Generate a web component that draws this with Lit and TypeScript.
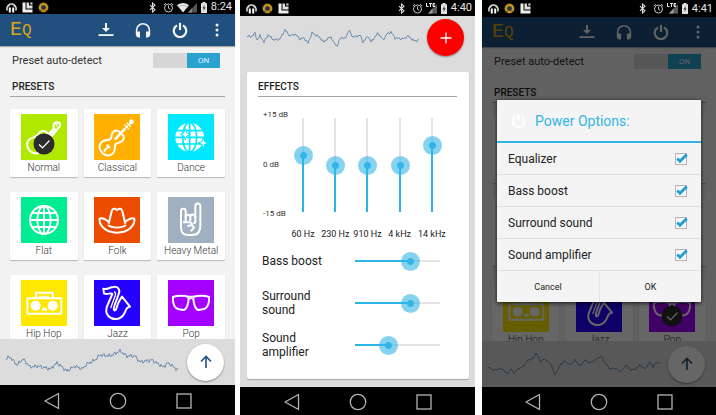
import { LitElement, html, svg, css, nothing } from "lit";
import { customElement, property } from "lit/decorators.js";
import { classMap } from "lit/directives/class-map.js";

/* ---------- shared glyphs ---------- */

const powerIcon = svg`<g fill="none" stroke="currentColor" stroke-width="2.200"><path d="M5 3.400A6.200 6.200 0 1 0 11 3.400"/><path d="M8 .800V8"/></g>`;
const downloadIcon = svg`<g fill="currentColor"><path d="M7 1h2v5h3L8 10 4 6h3z"/><path d="M.500 12.200h15v1.800H.500z"/></g>`;
const headphonesIcon = svg`<path fill="none" stroke="currentColor" stroke-width="1.600" d="M1.600 13V8.200a6.400 6.400 0 0 1 12.800 0V13"/><path fill="currentColor" d="M1 9.600h4v5.800H3.400Q1 15.400 1 13zM11 9.600h4V13q0 2.400-2.400 2.400H11z"/>`;
const dotsIcon = svg`<g fill="currentColor"><circle cx="8" cy="3" r="1.500"/><circle cx="8" cy="8" r="1.500"/><circle cx="8" cy="13" r="1.500"/></g>`;

const statusGlyphs: Record<string, { w: number; art: unknown }> = {
  phones: {
    w: 11,
    art: svg`<path d="M1.300 8.500A4.600 4.600 0 1 1 9.700 8.500" fill="none" stroke="#e8e8e8" stroke-width="1.500"/><path d="M2.500 5.200a3 3 0 0 1 6 0" fill="none" stroke="#bbb"/><path d="M2.800 5.500h2v5h-2zM6.200 5.500h2v5h-2z" fill="#fff"/>`,
  },
  le: {
    w: 11,
    art: svg`<path d="M.500.500H3.500V7.500H10.500V10.500H.500z" fill="#eee"/><path d="M4.500.500H7V3.500H10.500V6.500H4.500z" fill="#ddd"/><path d="M8.300.500h2.200v2H8.300z" fill="#ddd"/>`,
  },
  speaker: {
    w: 11,
    art: svg`<circle cx="5.500" cy="5.500" r="5" fill="#8a6a1c"/><circle cx="5.500" cy="5.500" r="3.700" fill="none" stroke="#e3a622" stroke-width="1.300"/><circle cx="5.500" cy="5.500" r="2" fill="#23304a"/><path d="M1.500 9.800l2-2M9.500 9.800l-2-2" stroke="#30281a"/>`,
  },
  bluetooth: {
    w: 11,
    art: svg`<path d="M1 3.200 6 7.800 3.500 10V1L6 3.200 1 7.800" fill="none" stroke="#ddd" stroke-width="1.100"/>`,
  },
  alarm: {
    w: 11,
    art: svg`<g fill="none" stroke="#c8c8c8"><circle cx="5.500" cy="6" r="4"/><path d="M5.500 3.500V6.200l1.800 1M.800 3l2-1.800M10.200 3l-2-1.800"/></g>`,
  },
  wifi: {
    w: 20,
    art: svg`<path d="M0 3.200Q6-1.200 12 3.200L6 10.500z" fill="#e6e6e6"/><path d="M1.500 5Q6 1.500 10.500 5" stroke="#999" fill="none" stroke-width=".600"/><path d="M20 1V10.500H11z" fill="#555"/><path d="M15 6.300V10.500H11z" fill="#888"/>`,
  },
  lte: {
    w: 11,
    art: svg`<path d="M11 1V10.500H2z" fill="#5c5c5c"/><path d="M.500 0V3.500H2.500M3 .500H6M4.500.500V4M9 .500H7V3.500H9M7 2H9" stroke="#eee" fill="none"/><path d="M6.500 5.500V10.500H2z" fill="#999"/>`,
  },
  battery: {
    w: 8,
    art: svg`<path d="M2.500 0h3v1.200H7V11H1V1.200h1.500z" fill="#e2e2e2"/><path d="M4.800 2.800 2.500 6.300h1.400L3.300 9 5.700 5.500H4.200z" fill="#222"/>`,
  },
};

/* ---------- preset artwork, drawn on a 138-unit tile ---------- */

const globeLines = svg`<ellipse cx="69" cy="69" rx="20" ry="42"/><path d="M69 27V111M27 69H111M33 48H105M33 90H105"/>`;

interface Preset {
  name: string;
  color: string;
  art: unknown;
}

const presets: Preset[] = [
  {
    name: "Normal",
    color: "#b0e800",
    art: svg`<path d="M82 60C70 46 58 50 52 60 46 72 28 68 20 82 14 98 26 118 44 118 60 120 62 106 76 102 94 98 94 76 82 60Z"/><path d="M74 70 98 44M84 78 106 50M78 76 100 50" /><path d="M98 44 98 30Q106 22 116 27 120 36 112 42L106 50Z"/><circle cx="107" cy="34" r="3" stroke-width="3"/>`,
  },
  {
    name: "Classical",
    color: "#ffb000",
    art: svg`<g transform="translate(53 87) rotate(43)"><path d="M0-40C14-43 21-34 19-24 17-15 11-14 11-6 11 2 24 6 24 20 24 34 12 41 0 41-12 41-24 34-24 20-24 6-11 2-11-6-11-14-17-15-19-24-21-34-14-43 0-40Z"/><path d="M0-14V-60" stroke-width="8"/><path d="M0-60V-84M-10-66H10M-9-75H9" stroke-width="4"/><circle cx="0" cy="-87" r="4" fill="#fff"/><path d="M0 16V34M-7 14H7" stroke-width="6"/></g>`,
  },
  {
    name: "Dance",
    color: "#00e8ff",
    art: svg`<circle cx="65" cy="70" r="43" fill="#fff" stroke="none"/><g stroke="#00e8ff" stroke-width="5"><ellipse cx="65" cy="70" rx="21" ry="44"/><path d="M65 26V114M20 70H110M24 50H106M24 90H106"/></g><path fill="#fff" stroke="#00e8ff" stroke-width="3" d="M52 44 56 56 67 61 56 66 52 78 48 66 37 61 48 56ZM106 70 110 83 122 87 110 91 106 104 102 91 90 87 102 83Z"/>`,
  },
  {
    name: "Flat",
    color: "#00ec92",
    art: svg`<circle cx="69" cy="69" r="42"/>${globeLines}`,
  },
  {
    name: "Folk",
    color: "#ec4c00",
    art: svg`<path d="M44 80 53 43C55 33 62 34 69 39 76 34 83 33 85 43L94 80"/><path d="M44 74C36 68 26 60 17 65 14 84 34 107 69 107 104 107 124 84 121 65 112 60 102 68 94 74"/><path d="M42 84C54 94 84 94 96 84"/>`,
  },
  {
    name: "Heavy Metal",
    color: "#a0b0c0",
    art: svg`<path d="M39 92V42A7 7 0 0 1 53 42V62M82 62V27A7 7 0 0 1 97 27V86C97 104 88 114 72 114H62C48 114 39 106 39 92"/><path d="M53 76V60A7 7 0 0 1 67 60V72M67 60A7 7 0 0 1 82 60V74Q82 78 76 78"/><path d="M45 76H66Q74 78 70 85L58 87M72 84 78 92 68 103" />`,
  },
  {
    name: "Hip Hop",
    color: "#ffe800",
    art: svg`<rect x="19" y="55" width="102" height="46" rx="2"/><path d="M45 54V38H95V54M56 53V47M64 53V47M72 53V47M80 53V47"/><g fill="#fff" stroke="none"><circle cx="44" cy="77" r="15"/><circle cx="95" cy="77" r="15"/><path d="M62 92 65 83H75L79 92Z"/></g>`,
  },
  {
    name: "Jazz",
    color: "#2400ff",
    art: svg`<path d="M28 26C36 30 44 24 54 22 70 16 80 28 74 42L61 78C57 88 60 96 66 88L74 66Q80 56 84 50L108 80C96 80 96 92 90 102 80 120 56 122 43 108 34 98 35 86 42 72L55 42C50 36 40 46 30 40Z"/><path d="M60 36Q66 36 64 46L50 84" stroke-width="4"/>`,
  },
  {
    name: "Pop",
    color: "#a400ff",
    art: svg`<path d="M15 51C26 46 50 46 62 51 62 70 56 90 46 90L30 87C19 84 13 68 15 51ZM123 51C112 46 88 46 76 51 76 70 82 90 92 90L108 87C119 84 125 68 123 51Z"/><path d="M58 49H80M64 58 69 52 74 58" stroke-width="4"/>`,
  },
];

/* ---------- waveforms: key points, then a little noise between them ---------- */

const waves: Record<string, { pts: number[][]; noise: number; height: number }> = {
  calm: {
    height: 26,
    noise: 2.2,
    pts: [[0, 9], [4, 7], [11, 15], [17, 9], [24, 17], [32, 16], [44, 19], [51, 13], [61, 21], [69, 16], [76, 19], [81, 14], [89, 10], [94, 5], [104, 6], [114, 1], [121, 6], [129, 6], [134, 12], [146, 10], [157, 17], [162, 13], [172, 20]],
  },
  busy: {
    height: 20,
    noise: 1.5,
    pts: [[0, 7], [4, 8], [8, 4], [10, 11], [13, 7], [17, 13], [21, 6], [27, 11], [33, 10], [38, 1], [43, 7], [48, 5], [53, 10], [57, 9], [61, 14], [65, 4], [71, 7], [77, 13], [80, 10], [84, 8], [87, 14], [90, 17], [94, 8], [98, 10], [102, 1], [105, 7], [108, 8], [113, 6], [116, 13], [121, 7], [124, 13], [131, 4], [136, 11], [140, 5], [144, 3], [148, 9], [156, 10], [161, 7], [167, 12], [172, 11]],
  },
  peaks: {
    height: 26,
    noise: 0.8,
    pts: [[0, 15], [5, 18], [11, 17], [15, 17], [19, 22], [23, 17], [26, 21], [30, 17], [36, 14], [40, 8], [45, 7], [48, 1], [52, 9], [57, 7], [63, 12], [67, 23], [73, 12], [77, 9], [82, 13], [87, 8], [92, 14], [97, 8], [102, 11], [107, 8], [113, 4], [117, 11], [122, 17], [127, 16], [133, 20], [138, 13], [143, 18], [148, 17], [152, 13], [157, 17], [162, 10], [165, 15], [168, 11], [172, 11]],
  },
};

function wavePath(name: string): string {
  const { pts, noise } = waves[name];
  let d = "";
  let k = 0;
  for (let x = 0; x <= 172; x++) {
    while (k < pts.length - 2 && pts[k + 1][0] < x) k++;
    const [x0, y0] = pts[k];
    const [x1, y1] = pts[k + 1];
    const base = y0 + ((y1 - y0) * (x - x0)) / (x1 - x0);
    const wobble = Math.sin(x * 2.3) * 0.6 + Math.sin(x * 5.1 + 1) * 0.4;
    d += `${x ? "L" : "M"}${x} ${(base + wobble * noise + 1).toFixed(1)}`;
  }
  return d;
}

const waveform = (name: string) => html`
  <svg class="wave" width="174" height=${waves[name].height} viewBox="0 0 174 ${waves[name].height}" aria-hidden="true">
    <path d=${wavePath(name)} />
  </svg>
`;

const base = css`
  * { box-sizing: border-box; }
  button {
    font: inherit;
    color: inherit;
    background: none;
    border: 0;
    padding: 0;
    margin: 0;
  }
  svg { display: block; }
  .wave path {
    fill: none;
    stroke: #557ba5;
    stroke-width: 0.8;
  }
  .section {
    margin: 0;
    font-size: 10px;
    font-weight: 500;
    line-height: 18px;
    color: #222;
    border-bottom: 1px solid #a4a4a4;
  }
  .fab {
    flex: none;
    display: grid;
    place-items: center;
    width: 37px;
    height: 37px;
    border-radius: 50%;
    box-shadow: 0 1px 2px rgba(0, 0, 0, 0.4);
  }
`;

/* ---------- device frame: status bar, screen, navigation bar ---------- */

@customElement("phone-frame")
class PhoneFrame extends LitElement {
  @property() time = "";
  @property({ attribute: false }) left: string[] = [];
  @property({ attribute: false }) right: string[] = [];

  static styles = [
    base,
    css`
      :host {
        display: flex;
        flex-direction: column;
        min-width: 0;
        min-height: 0;
        background: #000;
      }
      .status {
        flex: none;
        display: flex;
        align-items: center;
        justify-content: space-between;
        height: var(--status-height, 16px);
        padding: 0 3px 0 6px;
        color: #e6e6e6;
        font-size: 11px;
        line-height: 14px;
      }
      .group { display: flex; align-items: center; gap: 5px; }
      .system { gap: 3px; }
      .screen {
        flex: 1;
        min-height: 0;
        display: flex;
        flex-direction: column;
        position: relative;
      }
      .nav {
        flex: none;
        display: flex;
        align-items: center;
        justify-content: center;
        gap: 48px;
        height: var(--nav-height, 28px);
        padding-top: 2px;
      }
      .nav svg { fill: none; stroke: #b4b4b4; stroke-width: 1.3; }
    `,
  ];

  private glyph(name: string) {
    const g = statusGlyphs[name];
    return html`<svg width=${g.w} height="11" viewBox="0 0 ${g.w} 11" aria-hidden="true">${g.art}</svg>`;
  }

  render() {
    return html`
      <div class="status">
        <div class="group">${this.left.map((n) => this.glyph(n))}</div>
        <div class="group system">${this.right.map((n) => this.glyph(n))}<time>${this.time}</time></div>
      </div>
      <div class="screen"><slot></slot></div>
      <nav class="nav">
        <button aria-label="Back"><svg width="18" height="18" viewBox="0 0 18 18"><path d="M15.500 1.500V16.500L2 9z" stroke-linejoin="round" /></svg></button>
        <button aria-label="Home"><svg width="18" height="18" viewBox="0 0 18 18"><circle cx="9" cy="9" r="7.700" /></svg></button>
        <button aria-label="Recent apps"><svg width="18" height="18" viewBox="0 0 18 18"><rect x="2" y="2" width="14" height="14" /></svg></button>
      </nav>
    `;
  }
}

/* ---------- preset list ---------- */

@customElement("presets-screen")
class PresetsScreen extends LitElement {
  @property() selected = "";
  @property() wave = "calm";

  static styles = [
    base,
    css`
      :host {
        flex: 1;
        min-height: 0;
        display: flex;
        flex-direction: column;
        background: #f2f2f2;
      }
      .bar {
        flex: none;
        display: flex;
        align-items: center;
        height: var(--bar-height, 32px);
        padding: 0 10px;
        color: #f4f4f4;
        background: #21507f;
        box-shadow: 0 1px 1px rgba(0, 0, 0, 0.3);
      }
      .logo {
        flex: 1;
        margin: 0;
        font: 400 20px/24px "Liberation Mono", monospace;
        color: #d9a514;
      }
      .logo-small { font-size: 16px; }
      .actions { display: flex; gap: 21px; }
      .pref {
        flex: none;
        display: flex;
        align-items: center;
        justify-content: space-between;
        height: 28px;
        padding: 0 15px 0 12px;
        font-size: 11px;
        color: #333;
      }
      .switch {
        display: flex;
        justify-content: flex-end;
        width: 67px;
        height: 15px;
        background: #d6d6d6;
      }
      .switch-on {
        width: 33px;
        font-size: 8px;
        line-height: 15px;
        text-align: center;
        color: #e4f4fa;
        background: #2aa2d0;
      }
      .section { margin: var(--section-gap, 4px) 10px 12px; padding-left: 2px; }
      .grid {
        flex: 1;
        min-height: 0;
        overflow: hidden;
        display: grid;
        grid-template-columns: repeat(3, minmax(0, 1fr));
        grid-auto-rows: 68px;
        gap: 15px 6px;
        padding: 0 10px;
      }
      .card {
        display: flex;
        flex-direction: column;
        align-items: center;
        padding-top: 5px;
        background: #fff;
        border-radius: 1px;
        box-shadow: 0 1px 1px rgba(0, 0, 0, 0.25);
        font-size: 10px;
        font-weight: 300;
        line-height: 15px;
        color: #333;
      }
      .tile { position: relative; width: 46px; height: 46px; }
      .art {
        fill: none;
        stroke: #fff;
        stroke-width: 6;
        stroke-linejoin: round;
      }
      .check { position: absolute; left: 12px; top: 19px; }
      .footer {
        flex: none;
        display: flex;
        align-items: center;
        justify-content: space-between;
        height: 46px;
        padding: 0 11px 0 6px;
        background: #dcdcdc;
      }
      .fab { background: #fff; color: #21507f; }
    `,
  ];

  private action(label: string, art: unknown) {
    return html`<button aria-label=${label}><svg width="16" height="16" viewBox="0 0 16 16">${art}</svg></button>`;
  }

  render() {
    return html`
      <header class="bar">
        <h1 class="logo">E<span class="logo-small">Q</span></h1>
        <div class="actions">
          ${this.action("Download", downloadIcon)} ${this.action("Headphones", headphonesIcon)}
          ${this.action("Power", powerIcon)} ${this.action("More", dotsIcon)}
        </div>
      </header>
      <div class="pref">
        <span id="auto">Preset auto-detect</span>
        <button class="switch" role="switch" aria-checked="true" aria-labelledby="auto">
          <span class="switch-on">ON</span>
        </button>
      </div>
      <h2 class="section">PRESETS</h2>
      <div class="grid">
        ${presets.map((p) => {
          const on = p.name === this.selected;
          return html`
            <button class=${classMap({ card: true, chosen: on })} aria-pressed=${on ? "true" : "false"}>
              <span class="tile">
                <svg class="art" width="46" height="46" viewBox="0 0 138 138" aria-hidden="true">
                  <rect width="138" height="138" fill=${p.color} stroke="none" />${p.art}
                </svg>
                ${on
                  ? html`<svg class="check" width="22" height="22" viewBox="0 0 22 22" aria-hidden="true">
                      <circle cx="11" cy="11" r="10.500" fill="#2c2c2c" />
                      <path d="M6 11.500 9.500 14.800 16.500 7.500" fill="none" stroke="#fff" stroke-width="1.200" />
                    </svg>`
                  : nothing}
              </span>
              <span>${p.name}</span>
            </button>
          `;
        })}
      </div>
      <footer class="footer">
        ${waveform(this.wave)}
        <button class="fab" aria-label="Scroll to top">
          <svg width="16" height="16" viewBox="0 0 16 16" fill="none" stroke="currentColor" stroke-width="1.600"><path d="M8 14V2.500M3 7.500 8 2.500 13 7.500" /></svg>
        </button>
      </footer>
    `;
  }
}

/* ---------- effects ---------- */

@customElement("effects-screen")
class EffectsScreen extends LitElement {
  private bands = [
    { label: "60 Hz", value: 4 },
    { label: "230 Hz", value: 0 },
    { label: "910 Hz", value: 0 },
    { label: "4 kHz", value: 0 },
    { label: "14 kHz", value: 8 },
  ];
  private effects = [
    { label: "Bass boost", value: 70 },
    { label: "Surround sound", value: 70 },
    { label: "Sound amplifier", value: 37 },
  ];

  static styles = [
    base,
    css`
      :host {
        flex: 1;
        min-height: 0;
        display: flex;
        flex-direction: column;
        background: #dcdcdc;
      }
      .top {
        flex: none;
        display: flex;
        align-items: center;
        justify-content: space-between;
        padding: 3px 11px 0 7px;
      }
      .fab { background: #f00; color: #fff; }
      .card {
        flex: 1;
        margin: 16px 6px 8px 7px;
        padding: 6px 12px 0 11px;
        background: #fff;
        border-radius: 2px;
        box-shadow: 0 1px 1px rgba(0, 0, 0, 0.25);
      }
      .eq {
        display: grid;
        grid-template-columns: 24px 1fr;
        padding: 13px 9px 0 5px;
        font-size: 8px;
        color: #333;
      }
      .scale {
        display: flex;
        flex-direction: column;
        justify-content: space-between;
        height: 109px;
        line-height: 10px;
        white-space: nowrap;
      }
      .bands { display: grid; grid-template-columns: repeat(5, 1fr); }
      .band {
        display: flex;
        flex-direction: column;
        align-items: center;
        gap: 16px;
        padding-top: 8px;
        font-size: 9px;
        line-height: 12px;
        white-space: nowrap;
        color: #222;
      }
      input {
        appearance: none;
        margin: 0;
        background: none;
      }
      input::-webkit-slider-runnable-track {
        background: linear-gradient(var(--dir), #2ab4e8 var(--fill), #e4e4e4 var(--fill));
      }
      input::-webkit-slider-thumb {
        appearance: none;
        width: 19px;
        height: 19px;
        border-radius: 50%;
        background: radial-gradient(circle, #33b5e5 3px, rgba(51, 181, 229, 0.6) 4px);
      }
      .vertical {
        --dir: to top;
        writing-mode: vertical-lr;
        direction: rtl;
        width: 19px;
        height: 94px;
      }
      .vertical::-webkit-slider-runnable-track { width: 2px; height: 100%; }
      .vertical::-webkit-slider-thumb { margin: 0 -9px 0 -8px; }
      .horizontal {
        --dir: to right;
        width: 85px;
        height: 19px;
      }
      .horizontal::-webkit-slider-runnable-track { width: 100%; height: 2px; }
      .horizontal::-webkit-slider-thumb { margin-top: -8px; }
      .effect {
        display: grid;
        grid-template-columns: 1fr 85px;
        align-items: center;
        height: 42px;
        padding: 0 17px 0 4px;
        font-size: 12px;
        line-height: 14px;
        color: #222;
      }
      .effect-name { max-width: 60px; }
    `,
  ];

  private fill(ratio: number, length: number) {
    return `--fill:${Math.round(9 + ratio * (length - 19))}px`;
  }

  render() {
    return html`
      <div class="top">
        ${waveform("busy")}
        <button class="fab" aria-label="Add">
          <svg width="12" height="12" viewBox="0 0 12 12" stroke="currentColor" stroke-width="1.300"><path d="M6 .500V11.500M.500 6H11.500" /></svg>
        </button>
      </div>
      <section class="card">
        <h2 class="section">EFFECTS</h2>
        <div class="eq">
          <div class="scale"><span>+15 dB</span><span>0 dB</span><span>-15 dB</span></div>
          <div class="bands">
            ${this.bands.map(
              (b) => html`<label class="band">
                <input class="vertical" type="range" min="-15" max="15" .value=${String(b.value)} style=${this.fill((b.value + 15) / 30, 94)} />
                <span>${b.label}</span>
              </label>`,
            )}
          </div>
        </div>
        ${this.effects.map(
          (e) => html`<label class="effect">
            <span class="effect-name">${e.label}</span>
            <input class="horizontal" type="range" min="0" max="100" .value=${String(e.value)} style=${this.fill(e.value / 100, 85)} />
          </label>`,
        )}
      </section>
    `;
  }
}

/* ---------- power dialog ---------- */

@customElement("power-dialog")
class PowerDialog extends LitElement {
  static styles = [
    base,
    css`
      :host {
        position: absolute;
        inset: 0;
        display: grid;
        align-items: center;
        padding: 0 15px 2px;
        background: rgba(0, 0, 0, 0.6);
      }
      .dialog {
        background: #f4f4f4;
        border-radius: 1px;
        box-shadow: 0 1px 4px rgba(0, 0, 0, 0.8);
        color: #222;
      }
      .title {
        display: flex;
        align-items: center;
        gap: 9px;
        height: 43px;
        margin: 0;
        padding: 0 14px;
        font-size: 14px;
        font-weight: 400;
        color: #33b5e5;
        border-bottom: 2px solid #33b5e5;
      }
      .title svg { color: #fff; }
      .option {
        display: flex;
        align-items: center;
        justify-content: space-between;
        height: 32px;
        padding: 0 13px 0 11px;
        font-size: 12px;
        border-bottom: 1px solid #dedede;
      }
      .box { display: grid; place-items: center; }
      .box > * { grid-area: 1 / 1; }
      .box input {
        appearance: none;
        width: 12px;
        height: 12px;
        margin: 0;
        border: 1px solid #b4b4b4;
        background: #f8f8f8;
      }
      .box svg { pointer-events: none; }
      .buttons { display: grid; grid-template-columns: 1fr 1fr; }
      .buttons button { height: 31px; font-size: 9px; }
      .buttons button + button { border-left: 1px solid #e4e4e4; }
    `,
  ];

  render() {
    return html`
      <div class="dialog" role="dialog" aria-labelledby="title">
        <h2 class="title" id="title">
          <svg width="15" height="15" viewBox="0 0 16 16" aria-hidden="true">${powerIcon}</svg>Power Options:
        </h2>
        ${["Equalizer", "Bass boost", "Surround sound", "Sound amplifier"].map(
          (name) => html`<label class="option">
            <span>${name}</span>
            <span class="box">
              <input type="checkbox" checked />
              <svg width="14" height="14" viewBox="0 0 14 14" aria-hidden="true">
                <path d="M3.200 6.500 6 9.200 12.800 2.400" fill="none" stroke="#1f9fd4" stroke-width="2.800" />
              </svg>
            </span>
          </label>`,
        )}
        <div class="buttons"><button>Cancel</button><button>OK</button></div>
      </div>
    `;
  }
}

@customElement("app-root")
class AppRoot extends LitElement {
  static styles = css`
    :host {
      display: grid;
      grid-template-columns: 235fr 235fr 236fr;
      grid-template-rows: minmax(0, 1fr);
      gap: 5px;
      height: 100vh;
      background: #fff;
      font-family: Roboto, "Liberation Sans", sans-serif;
    }
    .first { --status-height: 14px; --nav-height: 30px; }
    .third {
      --status-height: 17px;
      --bar-height: 30px;
      --section-gap: 9px;
      margin-left: 2px;
    }
  `;

  render() {
    return html`
      <phone-frame
        class="first"
        time="8:24"
        .left=${["phones", "le", "speaker"]}
        .right=${["bluetooth", "alarm", "wifi", "battery"]}
      >
        <presets-screen selected="Normal" wave="calm"></presets-screen>
      </phone-frame>
      <phone-frame time="4:40" .left=${["phones", "speaker", "le"]} .right=${["bluetooth", "alarm", "lte", "battery"]}>
        <effects-screen></effects-screen>
      </phone-frame>
      <phone-frame
        class="third"
        time="4:41"
        .left=${["phones", "speaker", "le"]}
        .right=${["bluetooth", "alarm", "lte", "battery"]}
      >
        <presets-screen selected="Pop" wave="peaks"></presets-screen>
        <power-dialog></power-dialog>
      </phone-frame>
    `;
  }
}
